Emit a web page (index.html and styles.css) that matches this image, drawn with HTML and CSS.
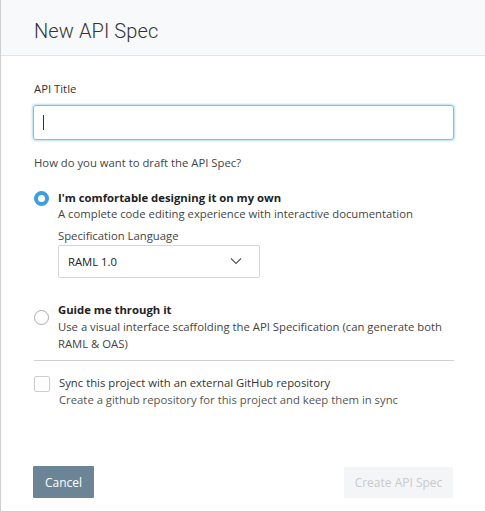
FILE: index.html
```html
<!DOCTYPE html>
<html>
<head>
<meta charset="utf-8">
<link rel="stylesheet" href="styles.css">
</head>
<body>
<div class="modal">
  <div class="header"><h1 class="title">New API Spec</h1></div>
  <div class="body">
    <label class="label">API Title</label>
    <div class="input"><span class="caret"></span></div>
    <div class="question">How do you want to draft the API Spec?</div>
    <div class="option first">
      <span class="radio checked"></span>
      <div class="opt-text">
        <div class="opt-title">I'm comfortable designing it on my own</div>
        <div class="opt-desc">A complete code editing experience with interactive documentation</div>
        <div class="sub-label">Specification Language</div>
        <div class="select">
          <span>RAML 1.0</span>
          <svg class="chev" width="12" height="8" viewBox="0 0 12 8"><path d="M1 1.5 L6 6.5 L11 1.5" fill="none" stroke="#555" stroke-width="1.1"/></svg>
        </div>
      </div>
    </div>
    <div class="option second">
      <span class="radio"></span>
      <div class="opt-text">
        <div class="opt-title">Guide me through it</div>
        <div class="opt-desc">Use a visual interface scaffolding the API Specification (can generate both RAML &amp; OAS)</div>
      </div>
    </div>
    <div class="divider"></div>
    <div class="option check-row">
      <span class="checkbox"></span>
      <div class="opt-text">
        <div class="check-title">Sync this project with an external GitHub repository</div>
        <div class="check-desc">Create a github repository for this project and keep them in sync</div>
      </div>
    </div>
  </div>
  <div class="footer">
    <button class="btn cancel">Cancel</button>
    <button class="btn create">Create API Spec</button>
  </div>
</div>
</body>
</html>
```
FILE: styles.css
```css
* { box-sizing: border-box; }
html, body { margin: 0; padding: 0; background: #fff; }
body { width: 485px; height: 512px; overflow: hidden; font-family: "Open Sans", sans-serif; color: #333; }
.modal { width: 485px; height: 512px; border-left: 1px solid #cfcfcf; border-bottom: 1px solid #cfcfcf; display: flex; flex-direction: column; }
.header { height: 56px; background: #f8f9fb; border-bottom: 1px solid #e4e5e7; padding: 7px 0 0 33px; display: flex; align-items: center; }
.title { margin: 0; font-family: "Roboto", sans-serif; font-weight: 300; font-size: 20px; color: #333; letter-spacing: 0.1px; }
.body { padding: 25px 31px 0 32px; flex: 1; font-size: 11.3px; }
.label { display: block; color: #333; margin-left: 1px; line-height: 16px; }
.input { margin-top: 8px; height: 35px; border: 1px solid #7cbfe9; border-radius: 3px; box-shadow: 0 0 2px 1px rgba(124,191,233,0.55); display: flex; align-items: center; padding-left: 9px; }
.caret { width: 1px; height: 15px; background: #333; }
.question { margin-top: 15px; margin-left: 1px; line-height: 16px; color: #444; }
.option { display: flex; gap: 9px; margin-left: 1px; }
.option.first { margin-top: 19px; }
.radio { flex: none; width: 15px; height: 15px; border-radius: 50%; border: 1px solid #aaa; margin-top: 1px; background: #fff; }
.radio.checked { border: 4.5px solid #3d9ee0; }
.opt-text { flex: 1; }
.opt-title { font-weight: 700; line-height: 16px; color: #222; }
.opt-desc { line-height: 17px; color: #444; margin-top: 0; }
.first .opt-desc { line-height: 16px; }
.sub-label { line-height: 16px; color: #444; margin-top: 6px; }
.select { width: 202px; height: 33px; border: 1px solid #d7d7d7; border-radius: 2px; margin-top: 1px; display: flex; align-items: center; justify-content: space-between; padding: 0 17px 0 9px; color: #222; }
.chev { display: block; margin-top: -2px; }
.option.second { margin-top: 24px; }
.option.second .radio { margin-top: 8px; }
.divider { height: 1px; background: #cfcfcf; margin-top: 8px; margin-left: 1px; }
.check-row { margin-top: 15px; }
.checkbox { flex: none; width: 16px; height: 16px; border: 1px solid #cfcfcf; border-radius: 2px; margin-top: 0; }
.check-title { line-height: 16px; color: #333; margin-top: -1px; }
.check-desc { line-height: 16px; color: #555; margin-top: 1px; }
.footer { display: flex; justify-content: space-between; padding: 0 32px 13px 32px; align-items: flex-end; }
.btn { font-family: "Open Sans", sans-serif; font-size: 12px; border: 0; border-radius: 1px; height: 32px; }
.cancel { width: 61px; background: #6b8596; color: #fff; }
.create { width: 109px; background: #f4f5f7; color: #c8cacc; height: 31px; }
```
